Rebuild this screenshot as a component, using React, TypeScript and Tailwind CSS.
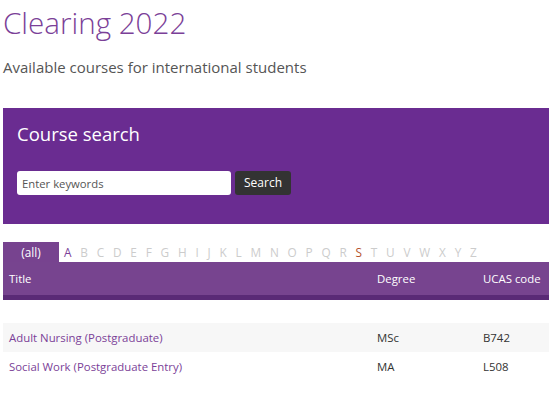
const letters = "ABCDEFGHIJKLMNOPQRSTUVWXYZ".split("");

const courses = [
  { title: "Adult Nursing (Postgraduate)", degree: "MSc", ucas: "B742" },
  { title: "Social Work (Postgraduate Entry)", degree: "MA", ucas: "L508" },
];

const App = () => {
  return (
    <div className="min-h-screen bg-white pl-[3px] pr-[5px] font-['Open_Sans',sans-serif]">
      {/* Heading */}
      <h1 className="pt-[4px] text-[29.6px] font-light leading-[38px] text-[#7b3f98]">Clearing 2022</h1>
      <p className="mt-[14px] text-[15px] leading-[22px] text-[#555555]">
        Available courses for international students
      </p>

      {/* Search box */}
      <div className="mt-[30px] h-[116px] bg-[#6a2c91] px-[14px] pt-[12px]">
        <h2 className="text-[18.5px] leading-[28px] text-white">Course search</h2>
        <div className="mt-[23px] flex items-center gap-[4px]">
          <input
            type="text"
            placeholder="Enter keywords"
            className="h-[24px] w-[214px] rounded-[3px] bg-white px-[5px] text-[11.3px] text-[#333] placeholder:text-[#555] outline-none"
          />
          <button
            type="button"
            className="h-[24px] w-[56px] rounded-[3px] bg-[#333333] text-[12px] text-white"
          >
            Search
          </button>
        </div>
      </div>

      {/* A-Z tabs */}
      <div className="mt-[18px] flex h-[20px] items-end text-[11.8px] leading-[20px]">
        <span className="w-[56px] bg-[#77438f] text-center text-white">(all)</span>
        <div className="flex gap-[8.8px] pl-[5px]">
          {letters.map((l) => (
            <span
              key={l}
              className={
                l === "A"
                  ? "text-[#7b3f98]"
                  : l === "S"
                    ? "text-[#b5522b]"
                    : "text-[#cccccc]"
              }
            >
              {l}
            </span>
          ))}
        </div>
      </div>

      {/* Table header */}
      <div className="flex h-[33px] items-center bg-[#77448f] pt-[1px] text-[11.4px] text-white">
        <span className="pl-[6px] w-[374px]">Title</span>
        <span className="w-[106px]">Degree</span>
        <span>UCAS code</span>
      </div>
      <div className="h-[5px] bg-[#5a2a76]" />

      {/* Rows */}
      <div className="mt-[23px] text-[11.4px]">
        {courses.map((c, i) => (
          <div
            key={c.ucas}
            className={`flex h-[29px] items-center pt-[1px] ${i % 2 === 0 ? "bg-[#f7f7f7]" : "bg-white"}`}
          >
            <span className="pl-[6px] w-[374px] text-[#7b3f98]">{c.title}</span>
            <span className="w-[106px] text-[#333333]">{c.degree}</span>
            <span className="text-[#333333]">{c.ucas}</span>
          </div>
        ))}
      </div>
    </div>
  );
};

export default App;
